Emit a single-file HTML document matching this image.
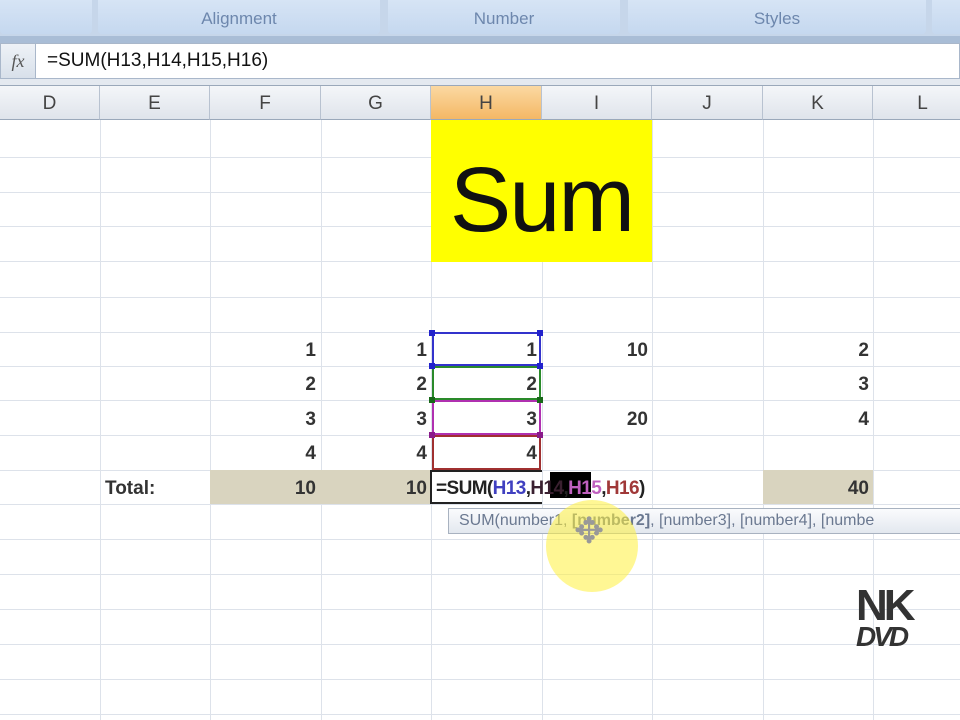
<!DOCTYPE html>
<html><head><style>
*{margin:0;padding:0;box-sizing:border-box}
body{width:960px;height:720px;overflow:hidden;background:#fff;position:relative;font-family:"Liberation Sans",sans-serif;color:#222}
.a{position:absolute}
.grp{position:absolute;top:0;height:34px;background:linear-gradient(#d6e4f5,#c5d8ef);border-radius:0 0 4px 4px;color:#6d87ad;font-size:17px;text-align:center;line-height:38px}
.hl{position:absolute;left:0;width:960px;height:1px;background:#dde2ea}
.vl{position:absolute;top:120px;width:1px;height:600px;background:#dde2ea}
.ch{position:absolute;top:86px;height:34px;background:linear-gradient(#f4f6f9,#dfe4eb);border-right:1px solid #b8c2d0;border-bottom:1px solid #9aa8ba;font-size:19px;color:#444;text-align:center;line-height:36px}
.n{position:absolute;font-size:19px;font-weight:bold;color:#333;text-align:right}
</style></head><body>
<div class="a" style="left:0;top:0;width:960px;height:43px;background:#c6d6ea"></div>
<div class="grp" style="left:0;width:92px"></div>
<div class="grp" style="left:98px;width:282px">Alignment</div>
<div class="grp" style="left:388px;width:232px">Number</div>
<div class="grp" style="left:628px;width:298px">Styles</div>
<div class="grp" style="left:932px;width:40px"></div>
<div class="a" style="left:0;top:36px;width:960px;height:7px;background:#a9bdd6"></div>
<div class="a" style="left:0;top:43px;width:36px;height:36px;background:linear-gradient(#eef2f7,#d8e0ea);border:1px solid #a9b7ca;font-family:'Liberation Serif',serif;font-style:italic;font-size:18px;color:#555;line-height:34px;text-align:center">fx</div>
<div class="a" style="left:36px;top:43px;width:924px;height:36px;border:1px solid #a9b7ca;border-left:none;background:#fff"></div>
<div class="a" style="left:47px;top:50px;font-size:19px;color:#111">=SUM(H13,H14,H15,H16)</div>
<div class="a" style="left:0;top:79px;width:960px;height:7px;background:#e4e9f0;border-bottom:1px solid #9aa8ba"></div>
<div class="ch" style="left:0;width:100px">D</div>
<div class="ch" style="left:100px;width:110px">E</div>
<div class="ch" style="left:210px;width:111px">F</div>
<div class="ch" style="left:321px;width:110px">G</div>
<div class="ch" style="left:431px;width:111px;background:linear-gradient(#fbd9a2,#f4b865)">H</div>
<div class="ch" style="left:542px;width:110px">I</div>
<div class="ch" style="left:652px;width:111px">J</div>
<div class="ch" style="left:763px;width:110px">K</div>
<div class="ch" style="left:873px;width:100px">L</div>
<div class="hl" style="top:157px"></div><div class="hl" style="top:192px"></div><div class="hl" style="top:226px"></div>
<div class="hl" style="top:261px"></div><div class="hl" style="top:297px"></div><div class="hl" style="top:332px"></div>
<div class="hl" style="top:366px"></div><div class="hl" style="top:400px"></div><div class="hl" style="top:435px"></div>
<div class="hl" style="top:470px"></div><div class="hl" style="top:504px"></div><div class="hl" style="top:539px"></div>
<div class="hl" style="top:574px"></div><div class="hl" style="top:609px"></div><div class="hl" style="top:644px"></div>
<div class="hl" style="top:679px"></div><div class="hl" style="top:714px"></div>
<div class="vl" style="left:100px"></div><div class="vl" style="left:210px"></div><div class="vl" style="left:321px"></div>
<div class="vl" style="left:431px"></div><div class="vl" style="left:542px"></div><div class="vl" style="left:652px"></div>
<div class="vl" style="left:763px"></div><div class="vl" style="left:873px"></div>
<div class="a" style="left:431px;top:120px;width:221px;height:142px;background:#ffff00;font-size:92px;text-align:center;line-height:160px;color:#111;letter-spacing:-2px">Sum</div>
<div class="a" style="left:210px;top:470px;width:221px;height:34px;background:#d9d4bf"></div>
<div class="a" style="left:763px;top:470px;width:110px;height:34px;background:#d9d4bf"></div>
<div class="n" style="left:210px;top:340px;width:106px">1</div><div class="n" style="left:321px;top:340px;width:106px">1</div><div class="n" style="left:431px;top:340px;width:106px">1</div><div class="n" style="left:542px;top:340px;width:106px">10</div><div class="n" style="left:763px;top:340px;width:106px">2</div>
<div class="n" style="left:210px;top:374px;width:106px">2</div><div class="n" style="left:321px;top:374px;width:106px">2</div><div class="n" style="left:431px;top:374px;width:106px">2</div><div class="n" style="left:763px;top:374px;width:106px">3</div>
<div class="n" style="left:210px;top:409px;width:106px">3</div><div class="n" style="left:321px;top:409px;width:106px">3</div><div class="n" style="left:431px;top:409px;width:106px">3</div><div class="n" style="left:542px;top:409px;width:106px">20</div><div class="n" style="left:763px;top:409px;width:106px">4</div>
<div class="n" style="left:210px;top:443px;width:106px">4</div><div class="n" style="left:321px;top:443px;width:106px">4</div><div class="n" style="left:431px;top:443px;width:106px">4</div>
<div class="n" style="left:105px;top:478px;text-align:left">Total:</div>
<div class="n" style="left:210px;top:478px;width:106px">10</div><div class="n" style="left:321px;top:478px;width:106px">10</div><div class="n" style="left:763px;top:478px;width:106px">40</div>
<div class="a" style="left:432px;top:332px;width:109px;height:34px;border:2px solid #3333cc"></div>
<div class="a" style="left:432px;top:366px;width:109px;height:34px;border:2px solid #2a8a2a"></div>
<div class="a" style="left:432px;top:400px;width:109px;height:35px;border:2px solid #b030b0"></div>
<div class="a" style="left:432px;top:435px;width:109px;height:35px;border:2px solid #a03030"></div>
<div class="a" style="left:429px;top:330px;width:6px;height:6px;background:#22c"></div><div class="a" style="left:537px;top:330px;width:6px;height:6px;background:#22c"></div>
<div class="a" style="left:429px;top:363px;width:6px;height:6px;background:#22c"></div><div class="a" style="left:537px;top:363px;width:6px;height:6px;background:#22c"></div>
<div class="a" style="left:429px;top:397px;width:6px;height:6px;background:#186818"></div><div class="a" style="left:537px;top:397px;width:6px;height:6px;background:#186818"></div>
<div class="a" style="left:429px;top:432px;width:6px;height:6px;background:#8a1a8a"></div><div class="a" style="left:537px;top:432px;width:6px;height:6px;background:#8a1a8a"></div>
<div class="a" style="left:430px;top:470px;width:112px;height:34px;border:2px solid #222;border-right:none;background:#fff"></div>
<div class="a" style="left:550px;top:472px;width:41px;height:26px;background:#000"></div>
<div class="a" style="left:436px;top:478px;font-size:19px;font-weight:bold;color:#222;white-space:nowrap;letter-spacing:-0.6px">=SUM(<span style="color:#4040c0">H13</span>,<span style="color:#3a2030">H14</span>,<span style="color:#c060c0">H15</span>,<span style="color:#a03838">H16</span>)</div>
<div class="a" style="left:448px;top:508px;width:520px;height:26px;background:linear-gradient(#fafbfd,#e3e8ef);border:1px solid #a8b2c0;font-size:16px;color:#6a7890;line-height:24px;padding-left:10px;white-space:nowrap">SUM(number1, <b>[number2]</b>, [number3], [number4], [numbe</div>
<div class="a" style="left:546px;top:500px;width:92px;height:92px;border-radius:50%;background:rgba(255,240,60,0.55)"></div>
<div class="a" style="left:574px;top:510px;font-size:36px;color:#999">✥</div>
<div class="a" style="left:856px;top:588px;font-size:44px;font-weight:900;color:#333;letter-spacing:-4px;line-height:36px">NK</div>
<div class="a" style="left:856px;top:624px;font-size:28px;font-weight:900;font-style:italic;color:#333;letter-spacing:-3px;line-height:26px">DVD</div>
</body></html>
